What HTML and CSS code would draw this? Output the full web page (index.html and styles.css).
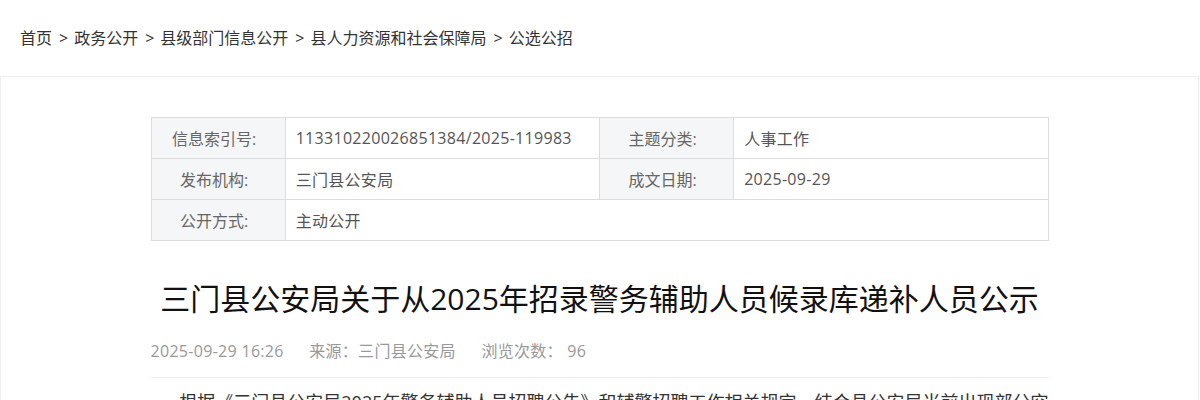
FILE: index.html
```html
<!DOCTYPE html>
<html lang="zh-CN">
<head>
  <meta charset="UTF-8" />
  <title>三门县公安局关于从2025年招录警务辅助人员候录库递补人员公示</title>
  <link rel="stylesheet" href="styles.css">
</head>
<body>
  <div class="crumbs"><a href="#">首页</a><span class="sep">&gt;</span><a href="#">政务公开</a><span class="sep">&gt;</span><a href="#">县级部门信息公开</a><span class="sep">&gt;</span><a href="#">县人力资源和社会保障局</a><span class="sep">&gt;</span><a href="#">公选公招</a></div>

  <div class="main">
    <div class="article">
      <table class="info">
        <tr>
          <th>信息索引号:</th>
          <td>113310220026851384/2025-119983</td>
          <th>主题分类:</th>
          <td>人事工作</td>
        </tr>
        <tr>
          <th>发布机构:</th>
          <td>三门县公安局</td>
          <th>成文日期:</th>
          <td>2025-09-29</td>
        </tr>
        <tr>
          <th>公开方式:</th>
          <td colspan="3">主动公开</td>
        </tr>
      </table>

      <h1>三门县公安局关于从2025年招录警务辅助人员候录库递补人员公示</h1>

      <div class="meta">
        <span>2025-09-29 16:26</span>
        <span>来源：三门县公安局</span>
        <span>浏览次数： 96</span>
      </div>

      <div class="content">
        <p>根据《三门县公安局2025年警务辅助人员招聘公告》和辅警招聘工作相关规定，结合县公安局当前出现部分空缺岗位情况，现从候录库中按成绩排名依次递补，现将递补人员名单予以公示。</p>
      </div>
    </div>
  </div>
</body>
</html>
```

FILE: styles.css
```css
* {
  margin: 0;
  padding: 0;
  box-sizing: border-box;
}

body {
  background: #fff;
  color: #333;
  font-family: "Open Sans", "Noto Sans CJK SC", sans-serif;
  font-size: 16px;
}

a {
  color: #333;
  text-decoration: none;
}

.crumbs {
  height: 76px;
  line-height: 76px;
  padding-left: 20px;
  white-space: nowrap;
}

.crumbs .sep {
  margin: 0 6px 0 7px;
}

.main {
  border: 1px solid #eee;
  border-bottom: none;
  width: 1199px;
}

.article {
  width: 898px;
  margin: 0 auto;
  padding-top: 40px;
}

.info {
  width: 898px;
  border-collapse: collapse;
  table-layout: fixed;
}

.info th,
.info td {
  height: 41px;
  border: 1px solid #ddd;
  font-weight: normal;
  color: #555;
}

.info th {
  width: 134px;
  background: #f5f6f7;
  text-align: center;
  padding-right: 8px;
  color: #666;
}

.info td {
  width: 314px;
  text-align: left;
  padding-left: 10px;
  letter-spacing: 0.3px;
}

h1 {
  margin-top: 36px;
  font-size: 30px;
  font-weight: normal;
  color: #111;
  text-align: center;
  line-height: 44px;
}

.meta {
  margin-top: 18px;
  color: #999;
  line-height: 24px;
  padding-bottom: 14px;
  border-bottom: 1px solid #eee;
  letter-spacing: 0.3px;
}

.meta span {
  margin-right: 21px;
}

.content {
  padding-top: 8px;
  font-size: 18px;
  line-height: 32px;
  color: #333;
}

.content p {
  text-indent: 1.6em;
}
```
